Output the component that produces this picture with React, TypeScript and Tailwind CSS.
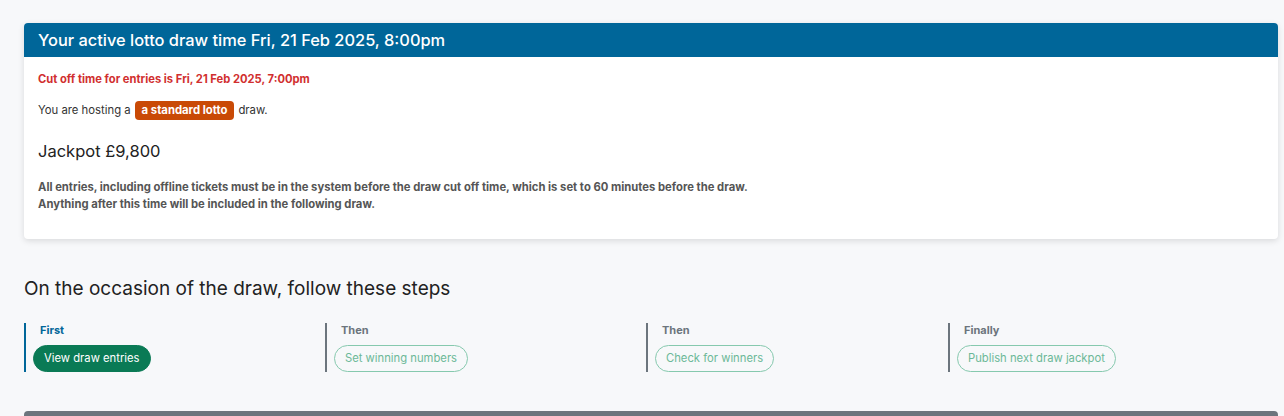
import React from 'react';

const STEPS = [
  { label: 'First', action: 'View draw entries', active: true, w: 'w-[301px]' },
  { label: 'Then', action: 'Set winning numbers', active: false, w: 'w-[321px]' },
  { label: 'Then', action: 'Check for winners', active: false, w: 'w-[302px]' },
  { label: 'Finally', action: 'Publish next draw jackpot', active: false, w: 'flex-1' },
];

export default function App() {
  return (
    <div className="min-h-[416px] bg-[#f7f8fa] pl-6 pr-[6px] pt-[23px] font-['Inter','Liberation_Sans',sans-serif] overflow-hidden">
      <div className="bg-white rounded-[4px] shadow-[0_2px_6px_rgba(0,0,0,0.12)] overflow-hidden">
        <div className="bg-[#006699] h-[34px] flex items-center px-[14px]">
          <h2 className="text-white text-[16.4px] font-medium leading-none">Your active lotto draw time Fri, 21 Feb 2025, 8:00pm</h2>
        </div>
        <div className="px-[14px] pt-[13px] pb-[26px]">
          <p className="text-[#d12f2f] text-[11.2px] font-bold leading-[18px]">Cut off time for entries is Fri, 21 Feb 2025, 7:00pm</p>
          <p className="mt-[12px] text-[11.3px] text-[#333] leading-[20px] flex items-center">
            You are hosting a
            <span className="mx-[4px] bg-[#c94a06] text-white font-bold rounded-[4px] px-[7px] h-[19px] inline-flex items-center">a standard lotto</span>
            draw.
          </p>
          <p className="mt-[19px] text-[16.5px] text-[#222] leading-[24px]">Jackpot £9,800</p>
          <div className="mt-[16px] text-[11.25px] font-bold text-[#555] leading-[17px]">
            <p>All entries, including offline tickets must be in the system before the draw cut off time, which is set to 60 minutes before the draw.</p>
            <p>Anything after this time will be included in the following draw.</p>
          </div>
        </div>
      </div>

      <h3 className="mt-[36px] text-[19px] text-[#222] leading-[28px]">On the occasion of the draw, follow these steps</h3>

      <div className="mt-[20px] flex">
        {STEPS.map((s, i) => (
          <div key={i} className={`${s.w} flex`}>
            <div className={`border-l-[2px] ${s.active ? 'border-[#006699]' : 'border-[#6c757d]'} pl-[7px] flex flex-col items-start`}>
              <span className={`ml-[7px] text-[11px] font-bold leading-[14px] ${s.active ? 'text-[#006699]' : 'text-[#6c757d]'}`}>{s.label}</span>
              <button
                className={`mt-[8px] h-[27px] px-[10px] rounded-full text-[11.25px] leading-none ${
                  s.active ? 'bg-[#0a7a55] text-white border border-[#0a7a55]' : 'bg-transparent text-[#6cb898] border border-[#86c9ae]'
                }`}
              >
                {s.action}
              </button>
            </div>
          </div>
        ))}
      </div>

      <div className="mt-[39px] h-[10px] bg-[#6c757d] rounded-t-[4px]" />
    </div>
  );
}
